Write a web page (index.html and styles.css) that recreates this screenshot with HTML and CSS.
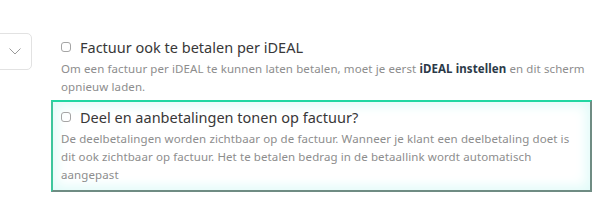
FILE: index.html
```html
<!DOCTYPE html>
<html lang="nl">
<head>
    <meta charset="UTF-8">
    <meta name="viewport" content="width=device-width, initial-scale=1.0">
    <title>Factuur instellingen</title>
    <link rel="stylesheet" href="styles.css">
</head>
<body>
    <div class="settings">
        <!-- dropdown links -->
        <div class="select">
            <svg class="chevron" width="12" height="7" viewBox="0 0 12 7">
                <path d="M0.5 0.5 L6 6 L11.5 0.5" fill="none" stroke="#9a9a9a" stroke-width="1"/>
            </svg>
        </div>

        <div class="options">
            <div class="option">
                <label class="option-title">
                    <span class="checkbox"></span>
                    Factuur ook te betalen per iDEAL
                </label>
                <p class="option-text">
                    Om een factuur per iDEAL te kunnen laten betalen, moet je eerst <a href="#">iDEAL instellen</a> en dit scherm opnieuw laden.
                </p>
            </div>

            <div class="option is-active">
                <label class="option-title">
                    <span class="checkbox"></span>
                    Deel en aanbetalingen tonen op factuur?
                </label>
                <p class="option-text">
                    De deelbetalingen worden zichtbaar op de factuur. Wanneer je klant een deelbetaling doet is dit ook zichtbaar op factuur. Het te betalen bedrag in de betaallink wordt automatisch aangepast
                </p>
            </div>
        </div>
    </div>
</body>
</html>
```

FILE: styles.css
```css
body {
    margin: 0;
    background-color: #ffffff;
    font-family: "Noto Sans", "Open Sans", sans-serif;
    overflow: hidden;
}
.settings {
    display: flex;
    align-items: flex-start;
    gap: 19px;
    padding-top: 30px;
}
.select {
    width: 40px;
    height: 37px;
    margin-left: -8px;
    margin-top: 3px;
    border: 1px solid #e2e2e2;
    border-radius: 5px;
    display: flex;
    align-items: center;
    padding-left: 16px;
    box-sizing: border-box;
}
.chevron {
    display: block;
}
.options {
    width: 541px;
}
.option {
    padding: 5px 4px 2px 8px;
    border: 2px solid transparent;
}
.option.is-active {
    padding-bottom: 6px;
    border-color: #22d6a2 #6f8c83 #6f8c83 #3fc69d;
    box-shadow: inset 0 0 12px 4px #e2fbf9;
}
.option-title {
    display: flex;
    align-items: center;
    font-size: 14.5px;
    line-height: 20px;
    color: #383838;
}
.checkbox {
    width: 8px;
    height: 8px;
    border: 1px solid #a5a5a5;
    border-radius: 3px;
    margin-right: 9px;
    flex-shrink: 0;
}
.option-text {
    margin: 3px 0 0;
    font-size: 11.5px;
    line-height: 18px;
    letter-spacing: 0.1px;
    color: #8d8d8d;
}
.option-text a {
    color: #2b3a48;
    font-weight: bold;
    text-decoration: none;
}
```
